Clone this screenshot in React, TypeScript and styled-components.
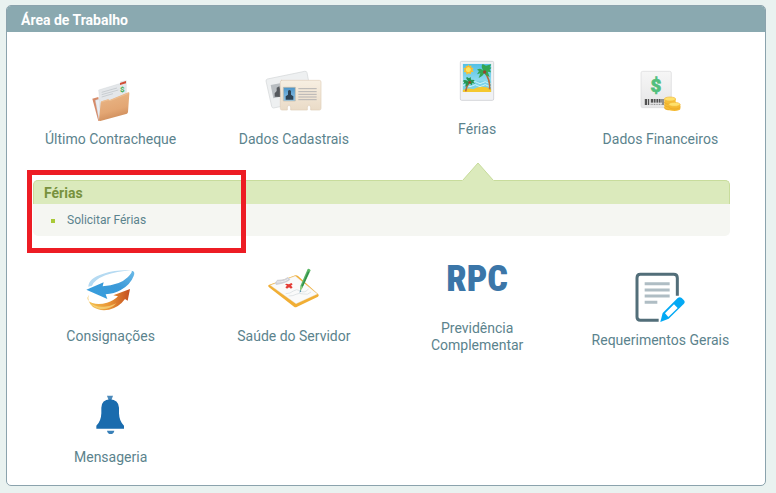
import React from "react";
import styled, { createGlobalStyle } from "styled-components";

const GlobalStyle = createGlobalStyle`
  * { box-sizing: border-box; }
  body {
    margin: 0;
    background: #e9f2f0;
    font-family: Roboto, "Liberation Sans", sans-serif;
  }
`;

const Panel = styled.main`
  margin: 5px 10px 6px 6px;
  border: 1px solid #8ba3ad;
  border-radius: 5px;
  background: #fff;
  overflow: hidden;
`;

const PanelTitle = styled.h1`
  margin: 0;
  padding: 5px 14px 3px;
  background: #8aa9b0;
  color: #fff;
  font-size: 14px;
  line-height: 18px;
`;

const PanelBody = styled.div`
  padding: 12px 13px 0 12px;
`;

const Row = styled.nav`
  display: grid;
  grid-template-columns: repeat(4, minmax(0, 1fr));
  align-items: center;
  justify-items: center;
  min-height: 121px;
`;

const TopRow = styled(Row)`
  min-height: 127px;
`;

const LastRow = styled(Row)`
  align-items: start;
  min-height: 120px;
  padding-top: 20px;
`;

const Tile = styled.a<{ $active?: boolean }>`
  display: flex;
  flex-direction: column;
  align-items: center;
  max-width: 140px;
  margin-bottom: ${(p) => (p.$active ? 20 : 0)}px;
  color: #5b838d;
  font-size: 14px;
  line-height: 17px;
  text-align: center;
  text-decoration: none;
`;

const Picture = styled.svg<{ $tall?: boolean }>`
  display: block;
  width: 64px;
  height: ${(p) => (p.$tall ? 72 : 64)}px;
`;

const Wordmark = styled.span`
  display: block;
  height: 64px;
  color: #3b76a8;
  font: 900 36px/46px Impact, "Roboto Condensed", "Liberation Sans Narrow", Roboto, sans-serif;
`;

const SubmenuArea = styled.div`
  position: relative;
  padding: 9px 22px 8px 14px;
`;

const Submenu = styled.section`
  border-radius: 5px;
  background: #f5f6f2;
`;

const SubmenuTitle = styled.h2`
  margin: 0;
  padding: 3px 10px 2px;
  border: 1px solid #c8dc9c;
  border-bottom: 0;
  border-radius: 5px 5px 0 0;
  background: #dbeabc;
  color: #78923e;
  font-size: 14px;
  line-height: 18px;
`;

const SubmenuList = styled.ul`
  margin: 0;
  padding: 8px 18px 7px;
  list-style: none;
`;

const SubmenuItem = styled.li`
  display: flex;
  align-items: center;
  gap: 12px;
  line-height: 17px;

  &::before {
    content: "";
    width: 4px;
    height: 4px;
    background: #a9c938;
  }
`;

const SubmenuLink = styled.a`
  color: #5b838d;
  font-size: 12px;
  text-decoration: none;
`;

const Pointer = styled.svg`
  position: absolute;
  top: -9px;
  left: 62.5%;
  width: 32px;
  height: 20px;
  margin-left: -15px;
`;

const Highlight = styled.div`
  position: absolute;
  top: -1px;
  left: 8px;
  width: 219px;
  height: 83px;
  border: 5px solid #ed1c24;
  pointer-events: none;
`;

const PayslipPicture = () => (
  <Picture viewBox="236 201 192 192" aria-hidden="true">
    <defs>
      <linearGradient id="folder" x1="0" y1="0" x2="0.3" y2="1">
        <stop offset="0" stopColor="#eab98a" />
        <stop offset="0.7" stopColor="#e3a673" />
        <stop offset="1" stopColor="#cf8e5c" />
      </linearGradient>
    </defs>
    <path d="M276 296l18-5 8 70-8 2z" fill="#d68b69" />
    <path d="M285 301l12-4 4 62-5 1z" fill="#e9edf2" stroke="#c5ccd5" />
    <path d="M295 270l66-20v-5l17-3v64l-77 22z" fill="#e4e7ea" stroke="#c9ced2" />
    <path d="M304 277l46-13M304 284l50-14M304 291l34-10" stroke="#b9bfc4" strokeWidth="2" />
    <path d="M359 249l18-6v7l-18 5z" fill="#d24c35" />
    <text x="359" y="277" fontSize="24" fontWeight="bold" fontFamily="Roboto" fill="#3eae50">$</text>
    <path d="M303 304l20-6 5 2 56-23q4 0 3 4l-4 56-3 4-80 22q-5 0-4-5l5-50z" fill="url(#folder)" />
    <path d="M302 306l22-6 5 2 55-22" fill="none" stroke="#f0c59a" strokeWidth="2" />
  </Picture>
);

const CardsPicture = () => (
  <Picture viewBox="96 51 192 192" aria-hidden="true">
    <defs>
      <linearGradient id="photo" x1="0" y1="0" x2="0" y2="1">
        <stop offset="0" stopColor="#4c94c8" />
        <stop offset="1" stopColor="#8fc5e9" />
      </linearGradient>
      <linearGradient id="card" x1="0" y1="0" x2="0" y2="1">
        <stop offset="0" stopColor="#f7efe2" />
        <stop offset="1" stopColor="#eadbc7" />
      </linearGradient>
    </defs>
    <path d="M112 87l112-23q6-1 7 4l16 82-116 24q-5 0-6-5l-17-76q0-5 4-6z" fill="#eef0f1" stroke="#d2d5d7" strokeWidth="2" />
    <path d="M122 105l28-5 8 39-28 6z" fill="#b9bec2" />
    <path d="M134 140v-10l6-7v-10l8-4 8 32z" fill="#55595d" />
    <path d="M153 91h115q5 0 5 5v79q0 5-5 5h-26v-7q-1-8-5-8t-5 8v7h-50v-7q-1-8-5-8t-5 8v7h-16q-5 0-5-5V96q0-5 5-5z" fill="url(#card)" stroke="#dfcfba" strokeWidth="2" />
    <path d="M160 112h36v41h-36z" fill="url(#photo)" stroke="#c8bba8" strokeWidth="2" />
    <path d="M167 149v-10l7-5v-11q4-6 9 0v11l7 5v10z" fill="#2d4254" />
    <path d="M205 116h55M205 125h55M205 133h55M205 141h55M205 149h55" stroke="#b5b3b4" strokeWidth="3" />
  </Picture>
);

const BeachPicture = () => (
  <Picture viewBox="45 21 192 192" aria-hidden="true">
    <defs>
      <linearGradient id="sky" x1="0" y1="0" x2="0" y2="1">
        <stop offset="0" stopColor="#51bfe6" />
        <stop offset="1" stopColor="#b9edf5" />
      </linearGradient>
      <clipPath id="photoArea"><path d="M98 41h86v85H98z" /></clipPath>
    </defs>
    <rect x="91" y="34" width="100" height="117" rx="4" fill="#f1f2f4" stroke="#d5d6da" strokeWidth="3" />
    <g clipPath="url(#photoArea)">
      <path d="M98 41h86v85H98z" fill="url(#sky)" />
      <path d="M98 92h86v34H98z" fill="#7bd2e8" />
      <path d="M98 98q8-6 15 0t15 0 15 0 15 0 15 0 15 0M98 107q8-6 15 0t15 0 15 0 15 0 15 0 15 0" fill="none" stroke="#d1f4f9" strokeWidth="3" />
      <path d="M98 120q18-8 32-2 20-14 54-2v12H98z" fill="#f5c82e" />
      <path d="M115 43l3 6 6-3v7l7 1-4 5 4 6-7 1-2 7-6-3-6 4-2-7-7-1 3-6-4-5 7-2 1-6 5 2z" fill="#fbc42d" />
      <circle cx="115" cy="59" r="9" fill="#ffe45c" stroke="#f5a624" strokeWidth="2" />
      <path d="M163 65q18 22 16 53M119 96q-10 12-12 28" fill="none" stroke="#b56b3c" strokeWidth="5" />
      <path d="M163 67q-9-17-22-8l6 4-6 10 10-3-5 14q15-6 17-17zM163 67q-13-18-5-25l10 5 16-4-5 9 7 1-7 5 4 9-10-2 6 16q-14-5-16-14z" fill="#33a653" />
      <path d="M118 97q-14-13-20-3l5 1-3 7 7-2-1 10q10-3 12-13zM118 97q-14-13-7-16l6 4 5-4 1 8 11 1-4 5 6 6-9-2-1 7q-6-1-8-9z" fill="#269650" />
      <circle cx="164" cy="66" r="5" fill="#95452b" /><circle cx="119" cy="97" r="4" fill="#95452b" />
    </g>
  </Picture>
);

const FinancePicture = () => (
  <Picture viewBox="115 36 192 192" aria-hidden="true">
    <defs>
      <linearGradient id="bill" x1="0" y1="0" x2="0" y2="1">
        <stop offset="0" stopColor="#f6f6f6" /><stop offset="1" stopColor="#e6e6e7" />
      </linearGradient>
    </defs>
    <rect x="154" y="49" width="91" height="109" rx="5" fill="url(#bill)" stroke="#dadadb" strokeWidth="2" />
    <text x="199" y="112" textAnchor="middle" fontSize="56" fontWeight="900" fontFamily="Roboto" fill="#51bf7c" stroke="#51bf7c" strokeWidth="2">$</text>
    <path d="M167 132v18M171 132v18M177 132v18M185 132v11M189 132v11M194 132v11M199 132v11M204 132v11M209 132v11M214 132v11M220 132v18" stroke="#353535" strokeWidth="3" />
    <path d="M183 148h34" stroke="#888" strokeWidth="3" strokeDasharray="3 2" />
    <path d="M224 132v27a17 7 0 0 0 34 0v-27z" fill="#f6be35" />
    <path d="M224 141a17 7 0 0 0 34 0M224 149a17 7 0 0 0 34 0M224 157a17 7 0 0 0 34 0" fill="none" stroke="#e5a42c" strokeWidth="2" />
    <ellipse cx="241" cy="132" rx="17" ry="6" fill="#ffe16b" stroke="#f2b83c" strokeWidth="2" />
    <path d="M237 148v13a17 7 0 0 0 35 0v-13z" fill="#f5b92f" />
    <path d="M237 155a17 7 0 0 0 35 0" fill="none" stroke="#e5a42c" strokeWidth="2" />
    <ellipse cx="254" cy="148" rx="17" ry="6" fill="#ffe16b" stroke="#f2b83c" strokeWidth="2" />
  </Picture>
);

const ExchangePicture = () => (
  <Picture viewBox="56 4 192 192" aria-hidden="true">
    <defs>
      <linearGradient id="blue" x1="0" y1="1" x2="1" y2="0">
        <stop offset="0" stopColor="#369fde" /><stop offset="0.55" stopColor="#3b99d8" /><stop offset="1" stopColor="#6cbbe8" />
      </linearGradient>
      <linearGradient id="orange" x1="0" y1="0" x2="1" y2="0">
        <stop offset="0" stopColor="#f4c351" /><stop offset="0.5" stopColor="#e99535" /><stop offset="1" stopColor="#c44e20" />
      </linearGradient>
    </defs>
    <path d="M84 72q0-25 45-39 46-13 85-9-46 0-79 14-32 13-40 31z" fill="#b5daf2" />
    <path d="M214 24q12 2 6 16-10 27-40 43-18 10-44 12l5 14-63-28 52-22-3 12q51-3 76-28 14-15 11-19z" fill="url(#blue)" />
    <path d="M85 96q-10 18 11 25 20 6 44-1 21-6 33-19l-14-3 50-19-7 35-8-5q-18 25-48 32-28 5-48-8-19-16-13-37z" fill="url(#orange)" />
    <path d="M88 119q14 15 43 13 20-1 37-10-14 17-44 18-24-2-36-21z" fill="#f8dc83" opacity="0.7" />
  </Picture>
);

const HealthPicture = () => (
  <Picture viewBox="96 12 192 192" aria-hidden="true">
    <path d="M116 75l80-29q4-1 8 2l61 55q3 4-1 7l-64 31q-4 2-8-1l-75-58q-5-4-1-7z" fill="#f1ae34" />
    <path d="M121 76l75-28 66 54-64 29z" fill="#fafafa" stroke="#e8e3da" />
    <path d="M134 70l8-11q24 1 30-8l9 7q-3 10-42 17z" fill="#d0d1d7" />
    <path d="M141 66q24 0 33-9" fill="none" stroke="#eeeef2" strokeWidth="3" />
    <path d="M170 71l7 2 7-4 4 4-5 4 5 5-5 4-6-4-6 4-5-4 5-5-6-4z" fill="#e43c36" />
    <path d="M167 101q14 0 23-8t22 0 24-7M176 108q14 0 22-5t22-1 23-6" fill="none" stroke="#d3d9dc" strokeWidth="2" />
    <path d="M210 92l2-16 21-49q6-2 9 4l-24 51z" fill="#5ab765" />
    <path d="M217 79l19-44" fill="none" stroke="#2f8c4c" strokeWidth="4" />
    <path d="M210 95l2-17 7 4z" fill="#91cc7e" /><path d="M209 98l1-7 4 2z" fill="#3582a8" />
  </Picture>
);

const FormPicture = () => (
  <Picture viewBox="115 0 192 216" $tall aria-hidden="true">
    <path d="M207 181h-55q-10 0-10-10V54q0-11 10-11h100q11 0 11 11v53" fill="none" stroke="#526e79" strokeWidth="9" />
    <path d="M165 71h75M165 90h75M165 108h75M165 127h38" stroke="#afbdc4" strokeWidth="9" />
    <path d="M212 186l7-27 45-45q6-5 12 0l6 6q6 6 0 12l-45 44z" fill="#03a9f4" />
    <path d="M226 160l27-27 11 11-28 27z" fill="#fff" />
  </Picture>
);

const BellPicture = () => (
  <Picture viewBox="56 0 192 192" aria-hidden="true">
    <path d="M140 32h18l-5 14h-8z" fill="#4c8abb" />
    <path d="M108 131v-9q14-12 15-37V68q1-24 26-25 25 1 27 25v17q1 25 15 37v9z" fill="#1a6cae" />
    <path d="M140 137h22q-2 10-11 10t-11-10z" fill="#3980b8" />
  </Picture>
);

export default function App() {
  return (
    <>
      <GlobalStyle />
      <Panel>
        <PanelTitle>Área de Trabalho</PanelTitle>
        <PanelBody>
          <TopRow>
            <Tile href="#contracheque"><PayslipPicture />Último Contracheque</Tile>
            <Tile href="#cadastrais"><CardsPicture />Dados Cadastrais</Tile>
            <Tile href="#ferias" $active><BeachPicture />Férias</Tile>
            <Tile href="#financeiros"><FinancePicture />Dados Financeiros</Tile>
          </TopRow>
          <SubmenuArea>
            <Submenu id="ferias">
              <SubmenuTitle>Férias</SubmenuTitle>
              <SubmenuList>
                <SubmenuItem><SubmenuLink href="#solicitar">Solicitar Férias</SubmenuLink></SubmenuItem>
              </SubmenuList>
            </Submenu>
            <Pointer viewBox="0 0 32 20" aria-hidden="true">
              <path d="M0 20v-1L16 1l16 18v1z" fill="#dbeabc" />
              <path d="M1 18L16 1l15 17" fill="none" stroke="#c8dc9c" />
            </Pointer>
            <Highlight />
          </SubmenuArea>
          <Row>
            <Tile href="#consignacoes"><ExchangePicture />Consignações</Tile>
            <Tile href="#saude"><HealthPicture />Saúde do Servidor</Tile>
            <Tile href="#previdencia"><Wordmark>RPC</Wordmark><span>Previdência<br />Complementar</span></Tile>
            <Tile href="#requerimentos"><FormPicture />Requerimentos Gerais</Tile>
          </Row>
          <LastRow>
            <Tile href="#mensageria"><BellPicture />Mensageria</Tile>
          </LastRow>
        </PanelBody>
      </Panel>
    </>
  );
}
